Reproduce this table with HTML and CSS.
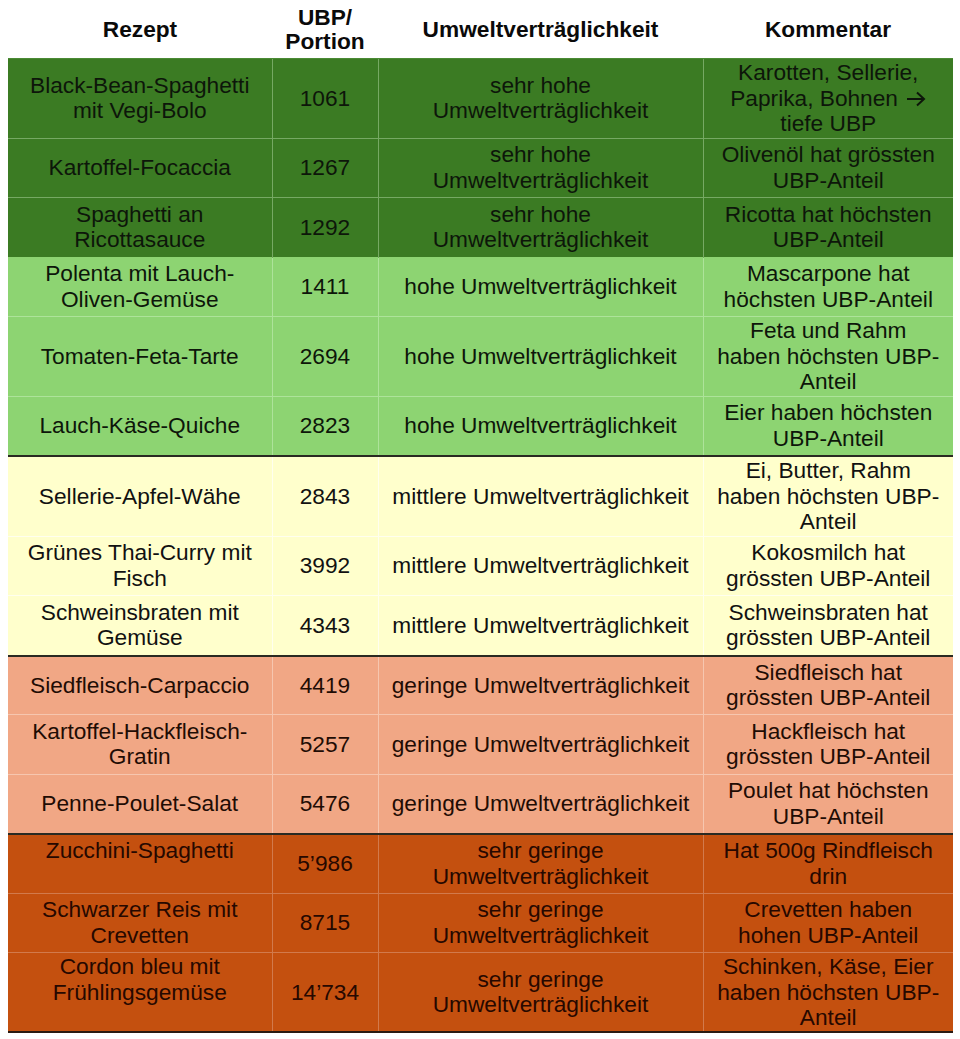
FILE: index.html
```html
<!DOCTYPE html>
<html lang="de">
<head>
<meta charset="utf-8">
<title>Rezepte UBP</title>
<link rel="stylesheet" href="styles.css">
</head>
<body>
<table class="ubp">
  <colgroup>
    <col class="c1"><col class="c2"><col class="c3"><col class="c4">
  </colgroup>
  <thead>
    <tr>
      <th>Rezept</th>
      <th>UBP/<br>Portion</th>
      <th>Umweltverträglichkeit</th>
      <th>Kommentar</th>
    </tr>
  </thead>
  <tbody class="g1">
    <tr><td>Black-Bean-Spaghetti<br>mit Vegi-Bolo</td><td>1061</td><td>sehr hohe<br>Umweltverträglichkeit</td><td>Karotten, Sellerie,<br>Paprika, Bohnen <svg class="arrow" viewBox="0 0 20 16" aria-label="→"><path d="M1 8 H18 M11 1.5 L18 8 L11 14.5" fill="none" stroke="currentColor" stroke-width="2"/></svg><br>tiefe UBP</td></tr>
    <tr><td>Kartoffel-Focaccia</td><td>1267</td><td>sehr hohe<br>Umweltverträglichkeit</td><td>Olivenöl hat grössten<br>UBP-Anteil</td></tr>
    <tr><td>Spaghetti an<br>Ricottasauce</td><td>1292</td><td>sehr hohe<br>Umweltverträglichkeit</td><td>Ricotta hat höchsten<br>UBP-Anteil</td></tr>
  </tbody>
  <tbody class="g2">
    <tr><td>Polenta mit Lauch-<br>Oliven-Gemüse</td><td>1411</td><td>hohe Umweltverträglichkeit</td><td>Mascarpone hat<br>höchsten UBP-Anteil</td></tr>
    <tr><td>Tomaten-Feta-Tarte</td><td>2694</td><td>hohe Umweltverträglichkeit</td><td>Feta und Rahm<br>haben höchsten UBP-<br>Anteil</td></tr>
    <tr><td>Lauch-Käse-Quiche</td><td>2823</td><td>hohe Umweltverträglichkeit</td><td>Eier haben höchsten<br>UBP-Anteil</td></tr>
  </tbody>
  <tbody class="g3">
    <tr><td>Sellerie-Apfel-Wähe</td><td>2843</td><td>mittlere Umweltverträglichkeit</td><td>Ei, Butter, Rahm<br>haben höchsten UBP-<br>Anteil</td></tr>
    <tr><td>Grünes Thai-Curry mit<br>Fisch</td><td>3992</td><td>mittlere Umweltverträglichkeit</td><td>Kokosmilch hat<br>grössten UBP-Anteil</td></tr>
    <tr><td>Schweinsbraten mit<br>Gemüse</td><td>4343</td><td>mittlere Umweltverträglichkeit</td><td>Schweinsbraten hat<br>grössten UBP-Anteil</td></tr>
  </tbody>
  <tbody class="g4">
    <tr><td>Siedfleisch-Carpaccio</td><td>4419</td><td>geringe Umweltverträglichkeit</td><td>Siedfleisch hat<br>grössten UBP-Anteil</td></tr>
    <tr><td>Kartoffel-Hackfleisch-<br>Gratin</td><td>5257</td><td>geringe Umweltverträglichkeit</td><td>Hackfleisch hat<br>grössten UBP-Anteil</td></tr>
    <tr><td>Penne-Poulet-Salat</td><td>5476</td><td>geringe Umweltverträglichkeit</td><td>Poulet hat höchsten<br>UBP-Anteil</td></tr>
  </tbody>
  <tbody class="g5">
    <tr><td class="lift">Zucchini-Spaghetti</td><td>5’986</td><td>sehr geringe<br>Umweltverträglichkeit</td><td>Hat 500g Rindfleisch<br>drin</td></tr>
    <tr><td>Schwarzer Reis mit<br>Crevetten</td><td>8715</td><td>sehr geringe<br>Umweltverträglichkeit</td><td>Crevetten haben<br>hohen UBP-Anteil</td></tr>
    <tr><td class="lift">Cordon bleu mit<br>Frühlingsgemüse</td><td>14’734</td><td>sehr geringe<br>Umweltverträglichkeit</td><td>Schinken, Käse, Eier<br>haben höchsten UBP-<br>Anteil</td></tr>
  </tbody>
</table>
</body>
</html>
```

FILE: styles.css
```css
html, body {
  margin: 0;
  padding: 0;
  background: #ffffff;
}

body {
  padding: 0 7px 0 8px;
  font-family: "Liberation Sans", Arial, sans-serif;
  color: #111111;
}

.ubp {
  border-collapse: collapse;
  table-layout: fixed;
  width: 945px;
  font-size: 22.7px;
  line-height: 25.5px;
}

.c1 { width: 264px; }
.c2 { width: 106px; }
.c3 { width: 325px; }
.c4 { width: 250px; }

.ubp th {
  font-weight: bold;
  text-align: center;
  vertical-align: middle;
  height: 58px;
  padding: 0 2px;
  line-height: 24px;
  color: #0a0a0a;
}

.ubp td {
  text-align: center;
  vertical-align: middle;
  padding: 1px 2px;
  height: 56.5px;
  border-left: 1px solid var(--line);
  border-top: 1px solid var(--line);
  background: var(--bg);
}

.ubp td:first-child { border-left: none; }

.ubp td.lift::after {
  content: "";
  display: block;
  height: 25.5px;
}

.arrow {
  width: 20px;
  height: 16px;
  vertical-align: -1px;
  margin-left: 2px;
}

.g1 { --bg: #3b7b23; --line: #76a963; color: #0d160a; }
.g2 { --bg: #8dd472; --line: #ade39a; color: #0d160a; }
.g3 { --bg: #ffffcc; --line: #ffffee; color: #111111; }
.g4 { --bg: #f1a785; --line: #f6c6af; color: #1f0c04; }
.g5 { --bg: #c4500f; --line: #d27a4c; color: #260800; }

.g1 tr:first-child td { border-top: 1px solid #4a8a34; }
.g2 tr:first-child td { border-top: 1px solid #8dd472; }
.g3 tr:first-child td,
.g4 tr:first-child td,
.g5 tr:first-child td { border-top: 2px solid #2a2a22; height: 55.5px; }
.g5 tr:last-child td { border-bottom: 2px solid #2a1a12; padding-bottom: 0; }
```
